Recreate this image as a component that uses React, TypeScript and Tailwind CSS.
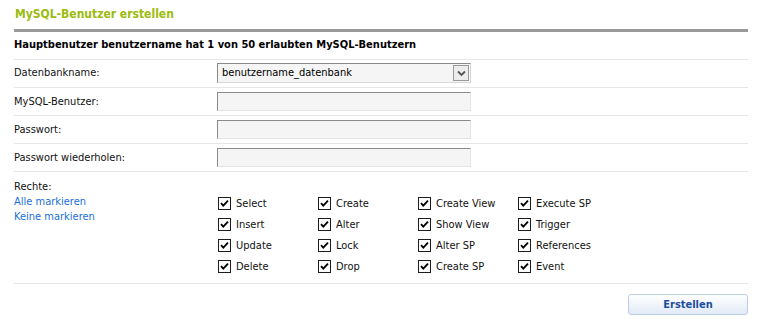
import React from "react"

const rights = [
  ["Select", "Create", "Create View", "Execute SP"],
  ["Insert", "Alter", "Show View", "Trigger"],
  ["Update", "Lock", "Alter SP", "References"],
  ["Delete", "Drop", "Create SP", "Event"],
]

function CheckBox() {
  return (
    <span className="flex h-[13px] w-[13px] items-center justify-center border border-[#1c1c1c] bg-white">
      <svg width="9" height="9" viewBox="0 0 9 9">
        <path d="M1 4.2 L3.3 6.6 L8 1.6" fill="none" stroke="#000" strokeWidth="1.8" />
      </svg>
    </span>
  )
}

function TextRow({ label }: { label: string }) {
  return (
    <div className="flex items-center border-b border-[#e6e6e6] pt-[4px] pb-[4px]">
      <div className="w-[203px]">{label}</div>
      <div className="h-[19px] w-[254px] border border-t-[#8a8a8a] border-l-[#8a8a8a] border-r-[#e4e4e4] border-b-[#e4e4e4] bg-[#f5f5f5]" />
    </div>
  )
}

export default function App() {
  return (
    <div className="min-h-[326px] bg-white pl-[14px] pr-[15px] font-['DejaVu_Sans_Condensed','DejaVu_Sans',sans-serif] text-[11px] leading-[14px] text-[#111]">
      <h1 className="border-b-[3px] border-[#9a9a9a] pl-px pt-[6px] pb-[7px] text-[12px] font-bold leading-[16px] text-[#9bbb0d]">
        MySQL-Benutzer erstellen
      </h1>
      <h2 className="border-b border-[#e6e6e6] pt-[6px] pb-[7px] text-[11px] font-bold leading-[14px] text-black">
        Hauptbenutzer benutzername hat 1 von 50 erlaubten MySQL-Benutzern
      </h2>

      <div className="flex items-center border-b border-[#e6e6e6] pt-[3px] pb-[4px]">
        <div className="w-[203px]">Datenbankname:</div>
        <div className="flex h-[20px] w-[254px] items-center border border-[#8a8a8a] border-r-[#d8d8d8] border-b-[#d8d8d8] bg-[#f5f5f5] pl-[4px] pr-px">
          <span className="flex-1 text-black">benutzername_datenbank</span>
          <span className="flex h-[16px] w-[16px] items-center justify-center border border-[#9a9a9a] bg-[#ececec]">
            <svg width="9" height="7" viewBox="0 0 9 7">
              <path d="M1 1.5 L4.5 5 L8 1.5" fill="none" stroke="#555" strokeWidth="1.8" />
            </svg>
          </span>
        </div>
      </div>

      <TextRow label="MySQL-Benutzer:" />
      <TextRow label="Passwort:" />
      <TextRow label="Passwort wiederholen:" />

      <div className="flex border-b border-[#e6e6e6] pb-[6px]">
        <div className="w-[203px] pt-[8px]">
          <div>Rechte:</div>
          <div className="leading-[15px] text-[#1a6fd6]">
            <div>Alle markieren</div>
            <div>Keine markieren</div>
          </div>
        </div>
        <div className="pl-px pt-[21px]">
          {rights.map((row, i) => (
            <div key={i} className="flex h-[21px] items-center">
              {row.map((name) => (
                <label key={name} className="flex w-[100px] items-center gap-[5px]">
                  <CheckBox />
                  <span>{name}</span>
                </label>
              ))}
            </div>
          ))}
        </div>
      </div>

      <div className="flex justify-end pt-[10px]">
        <button className="h-[21px] w-[120px] rounded-[3px] border border-[#bccde6] bg-gradient-to-b from-white to-[#e2eaf7] text-[11px] font-bold text-[#1d4f9e]">
          Erstellen
        </button>
      </div>
    </div>
  )
}
